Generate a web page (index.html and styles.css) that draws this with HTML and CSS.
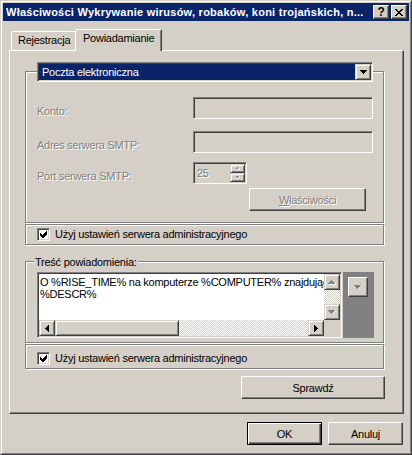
FILE: index.html
```html
<!DOCTYPE html>
<html lang="pl">
  <head>
    <meta charset="UTF-8" />
    <title>Właściwości</title>
    <link rel="stylesheet" href="styles.css">
  </head>
  <body>
    <div class="window">
      <div class="frame">
        <div class="caption">
          <span class="caption-title">Właściwości Wykrywanie wirusów, robaków, koni trojańskich, n...</span>
          <span class="caption-btn help">?</span>
          <span class="caption-btn">
            <svg width="8" height="7" viewBox="0 0 8 7"><path d="M0 0h2v1H0zM6 0h2v1H6zM1 1h2v1H1zM5 1h2v1H5zM2 2h4v1H2zM3 3h2v1H3zM2 4h4v1H2zM1 5h2v1H1zM5 5h2v1H5zM0 6h2v1H0zM6 6h2v1H6z" fill="#000"/></svg>
          </span>
        </div>

        <div class="content">
          <div class="tabs">
            <div class="tab">Rejestracja</div>
            <div class="tab active">Powiadamianie</div>
          </div>

          <div class="panel">
            <div class="group group-mail etched">
              <div class="combo">
                <span class="combo-value">Poczta elektroniczna</span>
                <span class="combo-btn">
                  <svg width="7" height="4" viewBox="0 0 7 4"><path d="M0 0h7v1H0zM1 1h5v1H1zM2 2h3v1H2zM3 3h1v1H3z" fill="#000"/></svg>
                </span>
              </div>

              <div class="row">
                <span class="label disabled">Konto:</span>
                <span class="edit"></span>
              </div>
              <div class="row row-smtp">
                <span class="label disabled">Adres serwera SMTP:</span>
                <span class="edit"></span>
              </div>
              <div class="row row-port">
                <span class="label disabled">Port serwera SMTP:</span>
                <span class="spin">
                  <span class="spin-value disabled">25</span>
                  <span class="spin-btns">
                    <span class="spin-btn">
                      <svg width="4" height="3" viewBox="0 0 4 3"><path d="M1 0h1v1H1zM0 1h3v1H0z" fill="#808080"/><path d="M1 2h3v1H1zM2 1h1v1H2z" fill="#fff"/></svg>
                    </span>
                    <span class="spin-btn">
                      <svg width="4" height="3" viewBox="0 0 4 3"><path d="M0 0h3v1H0zM1 1h1v1H1z" fill="#808080"/><path d="M3 0h1v1H3zM2 1h1v1H2zM1 2h1v1H1z" fill="#fff"/></svg>
                    </span>
                  </span>
                </span>
              </div>
              <div class="row row-btn">
                <span class="btn btn-props disabled"><u>W</u>łaściwości</span>
              </div>
            </div>

            <div class="check-row etched">
              <span class="checkbox">
                <svg width="9" height="9" viewBox="0 0 9 9"><path d="M1 3L3 5L7 1L8 1L8 4L4 8L3 8L1 6Z" fill="#000"/></svg>
              </span>
              <span class="check-label">Użyj ustawień serwera administracyjnego</span>
            </div>

            <div class="group group-text etched">
              <span class="group-label">Treść powiadomienia:</span>
              <div class="memo">
                <div class="memo-text">O %RISE_TIME% na komputerze %COMPUTER% znajdując<br>%DESCR%</div>
                <div class="vscroll">
                  <span class="sb-btn">
                    <svg width="8" height="5" viewBox="0 0 8 5"><path d="M3 0h1v1H3zM2 1h3v1H2zM1 2h5v1H1zM0 3h7v1H0z" fill="#808080"/><path d="M1 4h7v1H1zM7 3h1v1H7z" fill="#fff"/></svg>
                  </span>
                  <span class="sb-track"></span>
                  <span class="sb-btn">
                    <svg width="8" height="5" viewBox="0 0 8 5"><path d="M0 0h7v1H0zM1 1h5v1H1zM2 2h3v1H2zM3 3h1v1H3z" fill="#808080"/><path d="M7 0h1v1H7zM6 1h1v1H6zM5 2h1v1H5zM4 3h1v1H4z" fill="#fff"/></svg>
                  </span>
                </div>
                <div class="hscroll">
                  <span class="sb-btn">
                    <svg width="4" height="7" viewBox="0 0 4 7"><path d="M3 0h1v7H3zM2 1h1v5H2zM1 2h1v3H1zM0 3h1v1H0z" fill="#000"/></svg>
                  </span>
                  <span class="sb-thumb"></span>
                  <span class="sb-track"></span>
                  <span class="sb-btn">
                    <svg width="4" height="7" viewBox="0 0 4 7"><path d="M0 0h1v7H0zM1 1h1v5H1zM2 2h1v3H2zM3 3h1v1H3z" fill="#000"/></svg>
                  </span>
                </div>
                <div class="sb-corner"></div>
              </div>
              <div class="side">
                <span class="side-btn">
                  <svg width="8" height="5" viewBox="0 0 8 5"><path d="M0 0h7v1H0zM1 1h5v1H1zM2 2h3v1H2zM3 3h1v1H3z" fill="#808080"/><path d="M7 0h1v1H7zM6 1h1v1H6zM5 2h1v1H5zM4 3h1v1H4z" fill="#fff"/></svg>
                </span>
              </div>
            </div>

            <div class="check-row check-row-last etched">
              <span class="checkbox">
                <svg width="9" height="9" viewBox="0 0 9 9"><path d="M1 3L3 5L7 1L8 1L8 4L4 8L3 8L1 6Z" fill="#000"/></svg>
              </span>
              <span class="check-label">Użyj ustawień serwera administracyjnego</span>
            </div>

            <span class="btn btn-test">Sprawdź</span>
          </div>

          <div class="actions">
            <span class="btn btn-default">OK</span>
            <span class="btn">Anuluj</span>
          </div>
        </div>
      </div>
    </div>
  </body>
</html>
```

FILE: styles.css
```css
* {
  box-sizing: border-box;
}
body {
  margin: 0;
  background: #d4d0c8;
  font-family: "Liberation Sans", Arial, sans-serif;
  font-size: 11px;
  letter-spacing: -0.25px;
  color: #000;
}
svg {
  display: block;
  shape-rendering: crispEdges;
}
.disabled {
  color: #808080;
  text-shadow: 1px 1px 0 #fff;
}

/* window frame */
.window {
  width: 412px;
  height: 455px;
  border: 1px solid;
  border-color: #d4d0c8 #404040 #404040 #d4d0c8;
  background: #d4d0c8;
}
.frame {
  height: 100%;
  border: 1px solid;
  border-color: #fff #808080 #808080 #fff;
  padding: 1px;
}
.caption {
  display: flex;
  height: 18px;
  padding: 0 2px 0 3px;
  background: #0a246a;
  color: #fff;
}
.caption-title {
  flex: 1;
  font-weight: bold;
  line-height: 18px;
  letter-spacing: 0.25px;
  white-space: nowrap;
  overflow: hidden;
}
.caption-btn {
  display: flex;
  align-items: center;
  justify-content: center;
  width: 16px;
  height: 14px;
  margin: 2px 0 0 2px;
  background: #d4d0c8;
  color: #000;
  border: 1px solid;
  border-color: #fff #404040 #404040 #fff;
  box-shadow: inset -1px -1px #808080;
}
.help {
  font-weight: bold;
  font-size: 12px;
  line-height: 12px;
}

.content {
  padding: 0 5px 0 6px;
}

/* tabs */
.tabs {
  display: flex;
  align-items: flex-end;
  height: 21px;
  margin-top: 8px;
  padding-left: 2px;
}
.tab {
  width: 66px;
  height: 19px;
  padding: 2px 0 0 6px;
  line-height: 13px;
  border: 1px solid;
  border-bottom: 0;
  border-color: #fff #404040 transparent #fff;
  border-radius: 2px 2px 0 0;
  box-shadow: inset -1px 0 #808080;
  background: #d4d0c8;
}
.tab.active {
  position: relative;
  z-index: 1;
  width: 87px;
  height: 22px;
  margin: 0 0 -1px -2px;
  padding-left: 7px;
}

.panel {
  height: 364px;
  padding-left: 15px;
  border: 1px solid;
  border-color: #fff #404040 #404040 #fff;
  box-shadow: inset -1px -1px #808080;
}

/* etched frames */
.etched {
  width: 359px;
  border: 1px solid #808080;
  box-shadow: inset 1px 1px #fff, 1px 1px #fff;
}
.group {
  position: relative;
}
.group-mail {
  height: 152px;
  margin-top: 20px;
  padding: 25px 10px 0 11px;
}

/* combo */
.combo {
  position: absolute;
  top: -10px;
  left: 11px;
  display: flex;
  width: 336px;
  height: 20px;
  background: #fff;
  border: 1px solid;
  border-color: #808080 #fff #fff #808080;
  box-shadow: inset 1px 1px #404040, inset -1px -1px #d4d0c8;
  padding: 1px;
}
.combo-value {
  flex: 1;
  padding-left: 3px;
  line-height: 16px;
  background: #0a246a;
  color: #fff;
}
.combo-btn {
  display: flex;
  align-items: center;
  justify-content: center;
  width: 16px;
  border: 1px solid;
  border-color: #d4d0c8 #404040 #404040 #d4d0c8;
  box-shadow: inset 1px 1px #fff, inset -1px -1px #808080;
  background: #d4d0c8;
}

/* form rows */
.row {
  display: flex;
}
.row-smtp {
  margin-top: 12px;
}
.row-port {
  margin-top: 9px;
}
.row-btn {
  justify-content: flex-end;
  margin-top: 4px;
  padding-right: 7px;
}
.label {
  width: 156px;
  padding-top: 8px;
  line-height: 13px;
}
.edit,
.spin {
  height: 22px;
  border: 1px solid;
  border-color: #808080 #fff #fff #808080;
  box-shadow: inset 1px 1px #404040, inset -1px -1px #d4d0c8;
}
.edit {
  width: 180px;
}
.spin {
  display: flex;
  width: 54px;
  padding: 1px 1px 1px 2px;
}
.spin-value {
  flex: 1;
  line-height: 18px;
  padding-left: 1px;
}
.spin-btns {
  display: flex;
  flex-direction: column;
  width: 15px;
}
.spin-btn {
  display: flex;
  align-items: center;
  justify-content: center;
  flex: 1;
  border: 1px solid;
  border-color: #d4d0c8 #404040 #404040 #d4d0c8;
  box-shadow: inset 1px 1px #fff, inset -1px -1px #808080;
}

/* buttons */
.btn {
  display: flex;
  align-items: center;
  justify-content: center;
  width: 75px;
  height: 23px;
  border: 1px solid;
  border-color: #fff #404040 #404040 #fff;
  box-shadow: inset -1px -1px #808080;
  background: #d4d0c8;
}
.btn-props {
  width: 117px;
}
.btn-default {
  border-color: #000;
  box-shadow: inset 1px 1px #fff, inset -1px -1px #404040, inset -2px -2px #808080;
}
.btn-test {
  width: 144px;
  margin: 7px 0 0 216px;
}

/* checkbox rows */
.check-row {
  display: flex;
  align-items: center;
  height: 21px;
  margin-top: 1px;
  padding-left: 11px;
}
.check-row-last {
  align-items: flex-start;
  height: 25px;
  padding-top: 7px;
}
.checkbox {
  display: flex;
  align-items: center;
  justify-content: center;
  width: 13px;
  height: 13px;
  background: #fff;
  border: 1px solid;
  border-color: #808080 #fff #fff #808080;
  box-shadow: inset 1px 1px #404040, inset -1px -1px #d4d0c8;
}
.check-label {
  margin-left: 5px;
  line-height: 13px;
}

/* notification text */
.group-text {
  display: flex;
  height: 82px;
  margin-top: 16px;
  padding: 10px 0 0 11px;
}
.group-label {
  position: absolute;
  top: -6px;
  left: 8px;
  padding: 0 1px;
  line-height: 13px;
  background: #d4d0c8;
}
.memo {
  position: relative;
  width: 305px;
  height: 66px;
  background: #fff;
  border: 1px solid;
  border-color: #808080 #fff #fff #808080;
  box-shadow: inset 1px 1px #404040, inset -1px -1px #d4d0c8;
  padding: 1px;
  overflow: hidden;
}
.memo-text {
  padding: 2px 0 0 1px;
  line-height: 12px;
  white-space: nowrap;
}
.vscroll {
  position: absolute;
  top: 1px;
  right: 1px;
  display: flex;
  flex-direction: column;
  width: 16px;
  height: 46px;
}
.hscroll {
  position: absolute;
  left: 1px;
  bottom: 1px;
  display: flex;
  width: 285px;
  height: 16px;
}
.sb-corner {
  position: absolute;
  right: 1px;
  bottom: 1px;
  width: 16px;
  height: 16px;
  background: #d4d0c8;
}
.sb-btn,
.sb-thumb {
  display: flex;
  align-items: center;
  justify-content: center;
  flex: none;
  width: 16px;
  height: 16px;
  background: #d4d0c8;
  border: 1px solid;
  border-color: #d4d0c8 #404040 #404040 #d4d0c8;
  box-shadow: inset 1px 1px #fff, inset -1px -1px #808080;
}
.sb-thumb {
  width: 124px;
}
.sb-track {
  flex: 1;
  background: repeating-conic-gradient(#fff 0 25%, #d4d0c8 0 50%) 0 0 / 2px 2px;
}
.side {
  width: 31px;
  height: 66px;
  margin-left: 1px;
  padding: 5px 0 0 5px;
  background: #808080;
}
.side-btn {
  display: flex;
  align-items: center;
  justify-content: center;
  width: 20px;
  height: 20px;
  border: 1px solid;
  border-color: #fff #404040 #404040 #fff;
  box-shadow: inset -1px -1px #808080;
  background: #d4d0c8;
}

.actions {
  display: flex;
  justify-content: flex-end;
  gap: 6px;
  margin-top: 8px;
  padding-right: 1px;
}
```
